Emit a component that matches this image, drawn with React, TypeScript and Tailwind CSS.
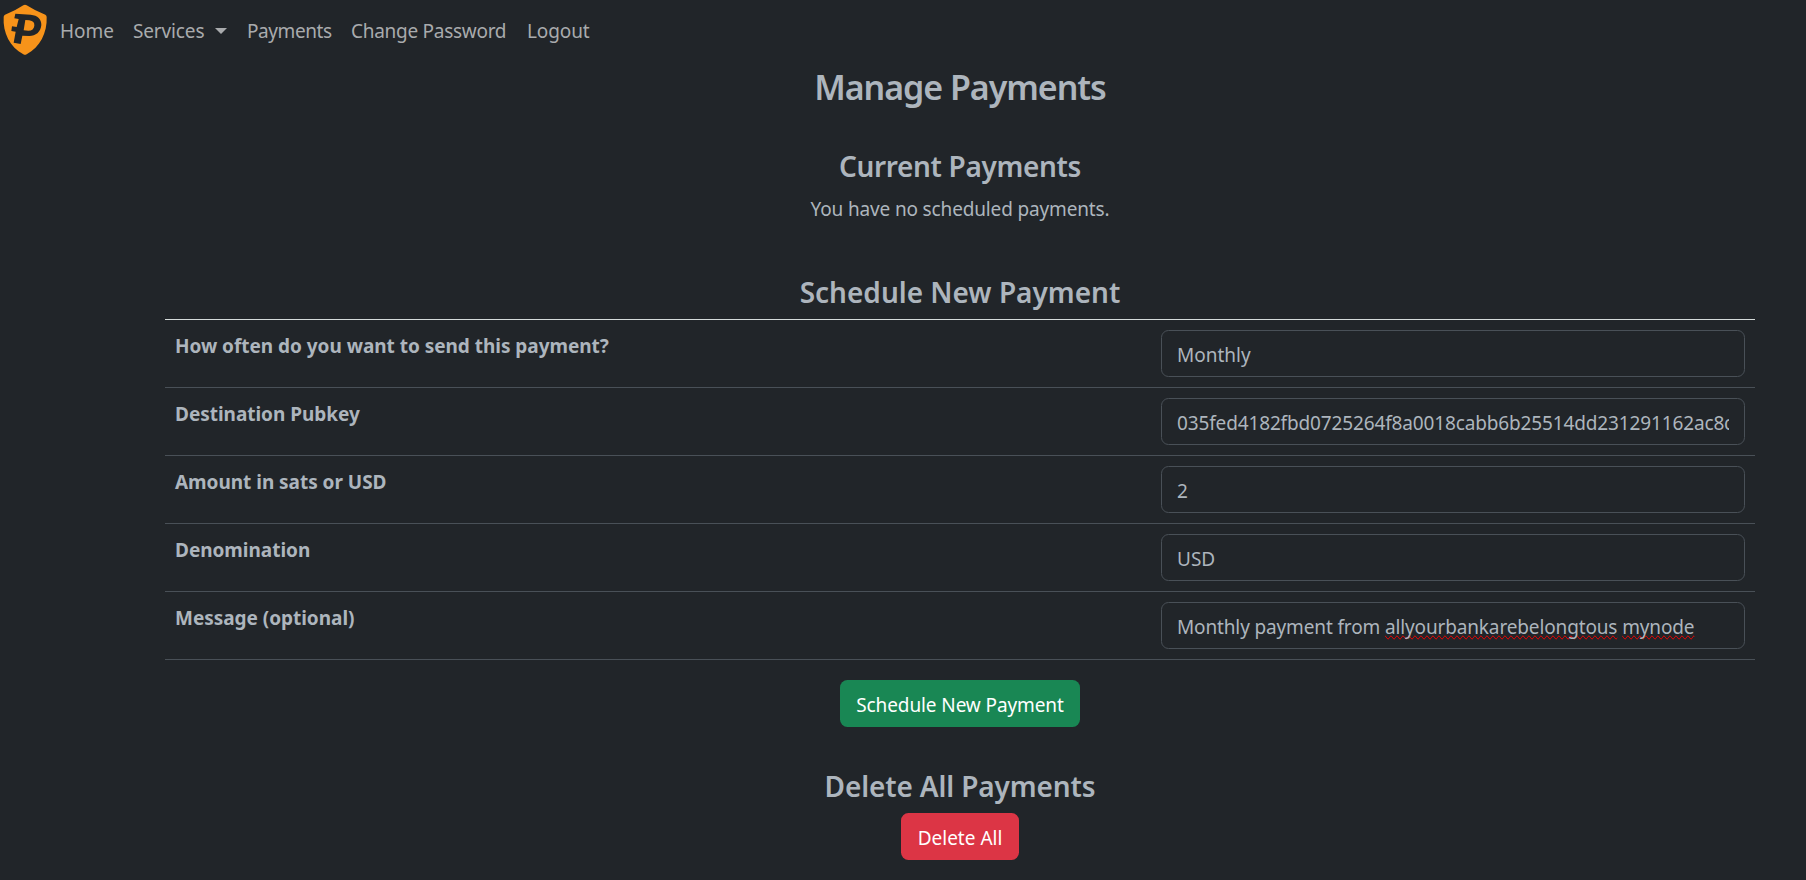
import React from "react";

const headingClass = "h-9 whitespace-nowrap text-[28px] leading-9 font-semibold";

const navLinks = [
  { label: "Home", className: "w-[73px]", caret: false },
  { label: "Services", className: "w-[114px] tracking-[-0.14px]", caret: true },
  { label: "Payments", className: "w-[104px] tracking-[-0.43px]", caret: false },
  { label: "Change Password", className: "w-[176px] tracking-[-0.28px]", caret: false },
  { label: "Logout", className: "tracking-[-0.1px]", caret: false },
];

const misspelled = "[text-decoration-line:spelling-error]";

const rows: { label: string; value: React.ReactNode; className: string }[] = [
  { label: "How often do you want to send this payment?", value: "Monthly", className: "" },
  {
    label: "Destination Pubkey",
    value: "035fed4182fbd0725264f8a0018cabb6b25514dd231291162ac8c",
    className: "tracking-[-0.14px]",
  },
  { label: "Amount in sats or USD", value: "2", className: "" },
  { label: "Denomination", value: "USD", className: "" },
  {
    label: "Message (optional)",
    value: (
      <>
        Monthly payment from <span className={misspelled}>allyourbankarebelongtous</span>{" "}
        <span className={misspelled}>mynode</span>
      </>
    ),
    className: "tracking-[-0.14px]",
  },
];

function Logo() {
  return (
    <svg className="h-[60px] w-[50px] shrink-0" viewBox="0 0 150 180" aria-hidden="true">
      <path
        d="M70 16Q75 13 80 16Q106 33 136 44Q140 46 140 51C142 98 120 142 80 163Q75 166 70 163C30 142 8 98 11 51Q11 46 15 44Q45 33 70 16Z"
        fill="#f7931a"
      />
      <path
        fillRule="evenodd"
        fill="#212529"
        d="M46 41L92 44C113 46 125 58 124 75C122 96 107 108 88 108L67 107L62 132L41 128L47 95L34 93L36 79L50 81L56 57L43 55ZM76 60L71 91L85 92C96 92 102 86 103 77C104 68 99 63 88 61Z"
      />
    </svg>
  );
}

export default function App() {
  return (
    <div className="h-[880px] w-[1806px] overflow-hidden bg-[#212529] font-['Noto_Sans',sans-serif] text-[19px] leading-[30px] text-[#adb5bd]">
      <nav className="flex h-[62px] items-start">
        <Logo />
        <div className="flex h-full items-center pl-[10px] text-[#a9abad]">
          {navLinks.map((link) => (
            <a key={link.label} className={`flex items-center whitespace-nowrap ${link.className}`}>
              {link.label}
              {link.caret && (
                <span className="ml-[11px] border-x-[6px] border-t-[6px] border-x-transparent border-t-[#a9abad]" />
              )}
            </a>
          ))}
        </div>
      </nav>

      <main className="ml-[165px] flex w-[1590px] flex-col items-center pt-1">
        <h2 className="h-[42px] text-[34px] leading-[42px] font-semibold tracking-[-1.05px] whitespace-nowrap">
          Manage Payments
        </h2>

        <h3 className={`mt-10 tracking-[-0.35px] ${headingClass}`}>Current Payments</h3>
        <p className="mt-[10px] tracking-[-0.15px]">You have no scheduled payments.</p>

        <h3 className={`mt-[50px] ${headingClass}`}>Schedule New Payment</h3>

        <div className="mt-[9px] w-full border-t border-[#d5dbda]">
          {rows.map((row) => (
            <div
              key={row.label}
              className="flex h-[68px] items-start justify-between border-b border-[#495057] px-[10px] pt-[10px]"
            >
              <span className="pt-px font-bold tracking-[-0.03px]">{row.label}</span>
              <div className="h-[47px] w-[584px] rounded-[7.5px] border border-[#495057] px-[15px] pt-[9px]">
                <div className={`h-9 overflow-hidden whitespace-nowrap ${row.className}`}>{row.value}</div>
              </div>
            </div>
          ))}
        </div>

        <button className="mt-5 h-[47px] w-[240px] rounded-[7.5px] bg-[#198754] pt-[3px] tracking-[-0.1px] whitespace-nowrap text-white">
          Schedule New Payment
        </button>

        <h3 className={`mt-[41px] tracking-[-0.13px] ${headingClass}`}>Delete All Payments</h3>
        <button className="mt-[9px] h-[47px] w-[118px] rounded-[7.5px] bg-[#dc3545] pt-[3px] whitespace-nowrap text-white">
          Delete All
        </button>
      </main>
    </div>
  );
}
